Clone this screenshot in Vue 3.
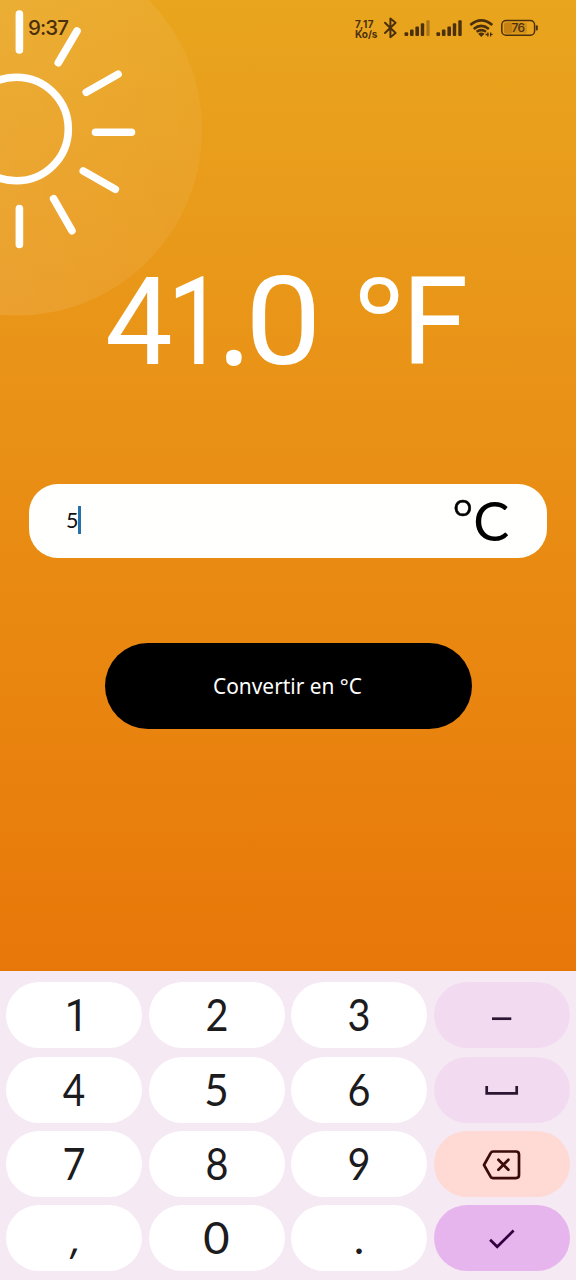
<script setup>
const result = [
  { char: '4', x: 104.9, sx: 0.98 },
  { char: '1', x: 167.4, sx: 0.82 },
  { char: '.', x: 217, sx: 1.04, round: true },
  { char: '0', x: 245, sx: 1.11 },
  { char: '°', x: 353.2, sx: 1, round: true },
  { char: 'F', x: 401.8, sx: 0.98 },
]
const keys = [
  { label: '1', font: 'plain', x: 70.6, sx: 0.93 },
  { label: '2', font: 'lato', sx: 0.89 },
  { label: '3', font: 'lato', sx: 0.89 },
  { icon: 'minus', tone: 'lilac' },
  { label: '4', font: 'lato', sx: 0.87 },
  { label: '5', font: 'lato', x: 67.5, sx: 0.95 },
  { label: '6', font: 'lato', sx: 0.89 },
  { icon: 'space', tone: 'lilac' },
  { label: '7', font: 'lato', sx: 0.89 },
  { label: '8', font: 'lato', sx: 0.89 },
  { label: '9', font: 'lato', sx: 0.89 },
  { icon: 'delete', tone: 'peach' },
  { label: ',', font: 'comma', x: 70, sx: 0.9 },
  { label: '0', font: 'lato', x: 67.5, sx: 1.02 },
  { label: '.', font: 'lato', sx: 1 },
  { icon: 'check', tone: 'violet' },
]
const place = (key) => `translate(${key.x ?? 68} 49.2) scale(${key.sx} 1)`
</script>

<template>
  <main class="screen">
    <svg class="sun" width="210" height="320" viewBox="0 0 210 320">
      <defs>
        <linearGradient id="halo" x1="0" y1="0" x2="1" y2="0">
          <stop offset="0.45" stop-color="#fff" stop-opacity="0.1" />
          <stop offset="1" stop-color="#fff" stop-opacity="0.055" />
        </linearGradient>
      </defs>
      <circle cx="16.5" cy="130" r="185.5" fill="url(#halo)" />
      <g fill="none" stroke="#fff" stroke-linecap="round" stroke-width="7.6">
        <circle cx="16.5" cy="129" r="51.8" />
        <path d="M19.4 14v36M77 31 58.3 62.7M118 74.2 86.3 92.3M95.5 132.2h36M83.3 171l32 18.3M53.6 198.7l18.3 32M19.4 208.5v36" />
      </g>
    </svg>

    <header class="status">
      <span class="time">9:37</span>
      <div class="indicators">
        <div class="speed"><span>7,17</span><span>Ko/s</span></div>
        <svg class="status-icons" width="160" height="24" viewBox="380 16 160 24">
          <path d="M385 22.7 395.6 33 390.4 37.2V18.4L395.6 22.7 385 33" fill="none" stroke="#4b300d" stroke-width="2" stroke-linejoin="round" stroke-linecap="round" />
          <g fill="#4b300d">
            <rect x="404.5" y="32.3" width="3.7" height="3.7" rx="1" />
            <rect x="410" y="29.6" width="3.6" height="6.4" rx="1" />
            <rect x="415.4" y="26.5" width="3.6" height="9.5" rx="1" />
            <rect x="420.8" y="23.2" width="3.4" height="12.8" rx="1" />
            <rect x="426.4" y="20.3" width="3.2" height="15.7" rx="1" opacity=".4" />
            <rect x="436.4" y="32.3" width="3.7" height="3.7" rx="1" />
            <rect x="441.9" y="29.6" width="3.6" height="6.4" rx="1" />
            <rect x="447.4" y="26.5" width="3.6" height="9.5" rx="1" />
            <rect x="452.8" y="23.2" width="3.4" height="12.8" rx="1" />
            <rect x="458.3" y="20.3" width="3.4" height="15.7" rx="1" />
            <path d="m481.3 37-3.2-3.2q3.2-2.4 6.4 0z" />
          </g>
          <path d="M470.3 25.1q11-9.4 22 0M473.7 28.9q7.6-6.2 15.2 0M476.6 31.8q4.7-3.3 9.4 0" fill="none" stroke="#4b300d" stroke-width="2.6" />
          <path d="M485.5 34.5h3.3M487.8 32.5v4M490.6 32.4v4M490.6 34.3h2" fill="none" stroke="#4b300d" stroke-width="1.3" />
          <rect x="504" y="22.6" width="23" height="10.8" rx="2" fill="#d4911a" />
          <rect x="504" y="22.6" width="8" height="10.8" rx="2" fill="#c58213" />
          <rect x="501.8" y="20.6" width="32.8" height="14.7" rx="4.3" fill="none" stroke="#4b300d" stroke-width="1.5" />
          <rect x="535.8" y="25.2" width="2" height="5.4" rx="1" fill="#4b300d" />
          <text class="battery" x="518" y="32.3" text-anchor="middle">76</text>
        </svg>
      </div>
    </header>

    <svg class="result" width="400" height="190" viewBox="88 220 400 190">
      <text
        v-for="glyph in result"
        :key="glyph.char"
        :class="{ round: glyph.round }"
        :transform="`translate(${glyph.x} 364) scale(${glyph.sx} 1)`"
      >{{ glyph.char }}</text>
    </svg>

    <section class="field">
      <div class="entry"><span class="value">5</span><i class="caret"></i></div>
      <svg class="unit" width="62" height="74" viewBox="450 484 62 74">
        <text><tspan x="451.4" y="538.8" class="ring">°</tspan><tspan x="473.3" y="540.9">C</tspan></text>
      </svg>
    </section>

    <button class="convert">
      <svg width="160" height="40" viewBox="0 0 160 40">
        <text x="5" y="27.7" textLength="149" lengthAdjust="spacingAndGlyphs">Convertir en °C</text>
      </svg>
    </button>

    <section class="keyboard">
      <button v-for="(key, i) in keys" :key="i" class="key" :class="key.tone">
        <svg width="136" height="66" viewBox="0 0 136 66">
          <text v-if="key.label" :transform="place(key)" text-anchor="middle" :class="key.font">{{ key.label }}</text>
          <g v-else fill="none" stroke="#2b1732" stroke-width="2.7">
            <path v-if="key.icon === 'minus'" d="M58 36.7h19.3" />
            <path v-else-if="key.icon === 'space'" d="M52.7 29v7.3h30V29" />
            <g v-else-if="key.icon === 'delete'" stroke="#3a0b08" stroke-linejoin="round" stroke-linecap="round">
              <path d="M59 20.5h23q3 0 3 3v20.6q0 3-3 3h-23q-1.5 0-2.4-1.4L50 34l6.6-11.8q.9-1.7 2.4-1.7z" />
              <path d="m64.4 28.8 10 10m0-10-10 10" />
            </g>
            <path v-else d="m56.1 34.7 7.1 7.1 16.4-16.3" stroke="#320040" />
          </g>
        </svg>
      </button>
    </section>
  </main>
</template>

<style>
body {
  margin: 0;
}
</style>

<style scoped>
.screen {
  position: relative;
  display: flex;
  flex-direction: column;
  align-items: center;
  width: 576px;
  height: 1280px;
  overflow: hidden;
  background: linear-gradient(#e9a51e 0, #e99217 390px, #e98610 680px, #e87709 971px);
  font-family: "Noto Sans", sans-serif;
}
svg {
  display: block;
  overflow: visible;
}
button {
  border: 0;
  padding: 0;
}
.sun {
  position: absolute;
  left: 0;
  top: 0;
}
.status {
  position: relative;
  display: flex;
  justify-content: space-between;
  box-sizing: border-box;
  width: 100%;
  height: 56px;
  padding: 0 36px 0 28px;
  color: #4b300d;
}
.time {
  font: 500 20.5px/56px Inter, sans-serif;
  letter-spacing: -0.9px;
}
.indicators {
  display: flex;
  padding-top: 16px;
}
.speed {
  display: flex;
  flex-direction: column;
  width: 25px;
  padding-top: 3px;
  font: 700 10px/10px Inter, sans-serif;
}
.speed span:first-child {
  letter-spacing: 0.5px;
}
.battery {
  font: 500 12px Inter, sans-serif;
  letter-spacing: -0.5px;
  fill: #4b300d;
}
.result {
  position: relative;
  margin-top: 164px;
}
.result text {
  font: 123px Roboto, sans-serif;
  fill: #fff;
}
.result .round {
  font: 121px "Noto Sans", sans-serif;
}
.field {
  display: flex;
  justify-content: space-between;
  align-items: center;
  box-sizing: border-box;
  width: 518px;
  height: 74px;
  margin-top: 74px;
  padding: 0 35px 0 37px;
  border-radius: 29px;
  background: #fffffd;
}
.entry {
  display: flex;
  align-items: center;
  height: 28px;
  padding-bottom: 2px;
}
.value {
  width: 12px;
  font: 21.5px/28px Lato, sans-serif;
  color: #111;
}
.caret {
  width: 3px;
  height: 28px;
  background: #2671a9;
}
.unit text {
  font: 54px Lato, sans-serif;
  fill: #000;
}
.unit .ring {
  font: 300 53px "Noto Sans", sans-serif;
  stroke: #000;
  stroke-width: 0.5;
}
.convert {
  display: flex;
  align-items: center;
  justify-content: center;
  width: 367px;
  height: 86px;
  margin-top: 85px;
  border-radius: 43px;
  background: #000;
}
.convert text {
  font: 22px "Noto Sans", sans-serif;
  fill: #fff;
}
.keyboard {
  display: grid;
  grid-template-columns: repeat(4, 136px);
  grid-auto-rows: 66px;
  gap: 8.3px 6.4px;
  box-sizing: border-box;
  width: 100%;
  height: 309px;
  margin-top: auto;
  padding: 11.3px 6.4px 0;
  background: #f5e9f3;
}
.key {
  border-radius: 33px;
  background: #fff;
}
.lilac {
  background: #f2dbf1;
}
.peach {
  background: #ffd9d4;
}
.violet {
  background: #e7b5ed;
}
.key text {
  fill: #1c1b1e;
}
.lato {
  font: 44.5px Lato, sans-serif;
}
.plain {
  font: 45px Roboto, sans-serif;
}
.comma {
  font: italic 42px "Noto Sans", sans-serif;
}
</style>
